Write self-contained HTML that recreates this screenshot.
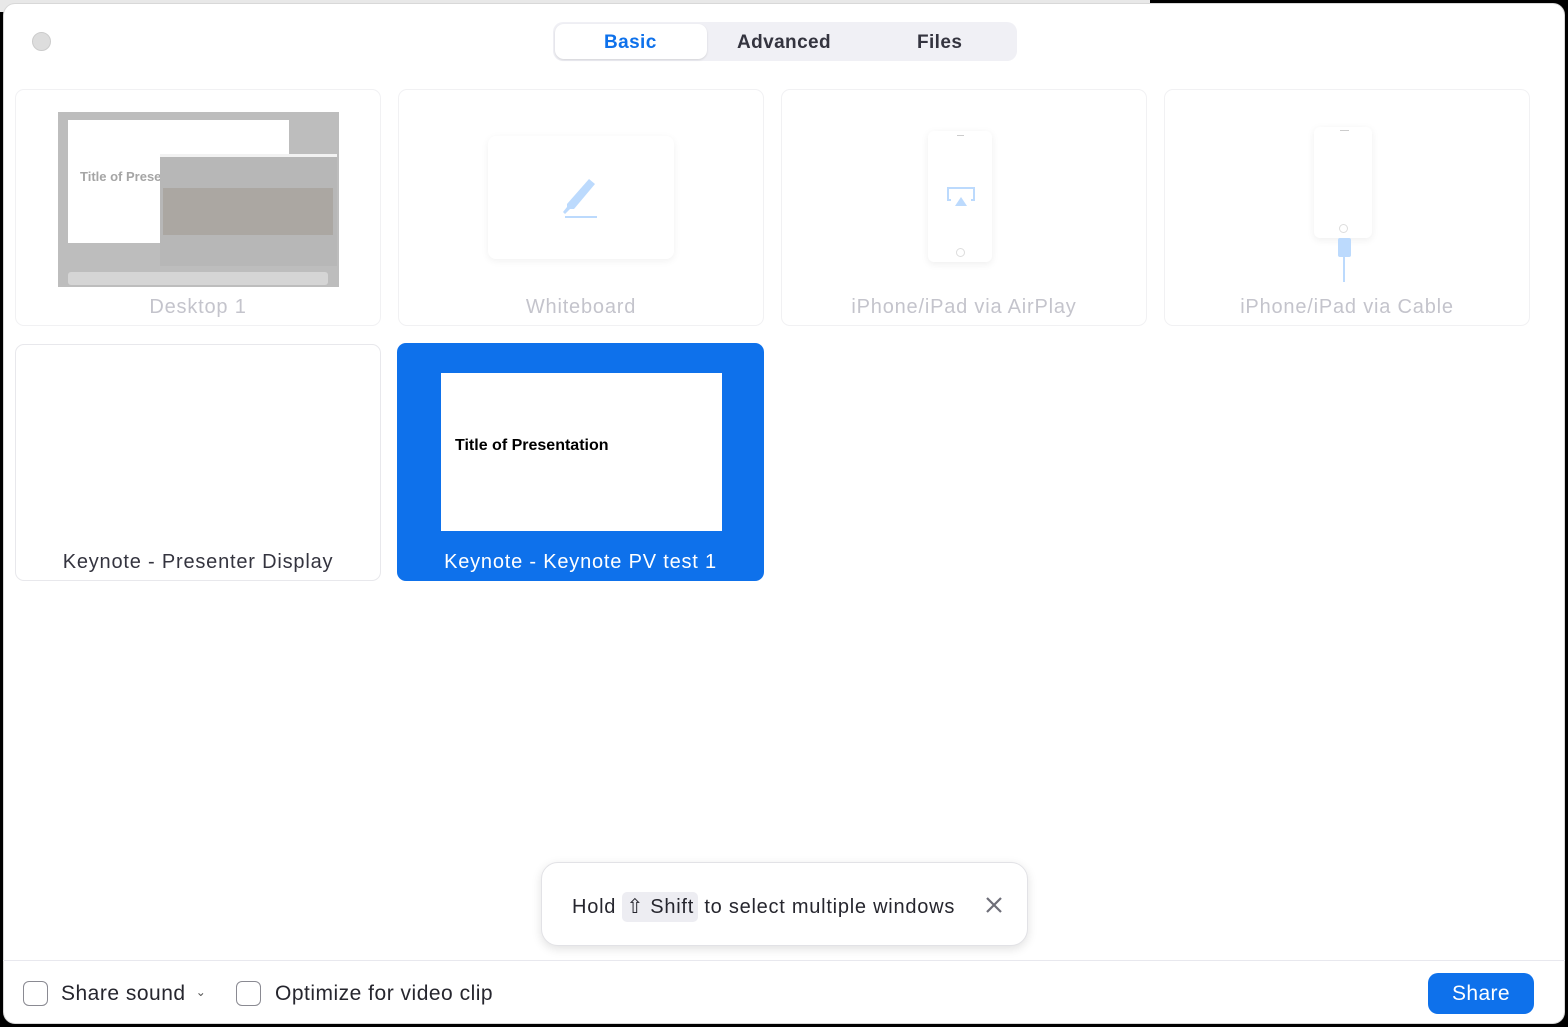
<!DOCTYPE html>
<html><head><meta charset="utf-8"><style>
*{box-sizing:border-box;margin:0;padding:0}
body{width:1568px;height:1027px;background:#000;font-family:"Liberation Sans",sans-serif;position:relative;overflow:hidden}
.top{position:absolute;left:0;top:0;width:1150px;height:12px;background:#e8e8e8}
.win{position:absolute;left:3px;top:3px;width:1562px;height:1021px;background:#fff;border-radius:12px;border:1px solid #d8d8d8}
.dot{position:absolute;left:28px;top:28px;width:19px;height:19px;border-radius:50%;background:#ddd;border:1px solid #ccc}
.seg{position:absolute;left:549px;top:18px;width:464px;height:39px;background:#f0f0f5;border-radius:10px}
.seg .on{position:absolute;left:2px;top:2px;width:152px;height:35px;background:#fff;border-radius:9px;box-shadow:0 1px 2px rgba(0,0,0,.12)}
.seg span{position:absolute;top:10px;font-weight:bold;font-size:19px;color:#34343f;letter-spacing:.4px}
.card{position:absolute;width:366px;height:237px;border:1px solid #f1f1f3;border-radius:9px;background:#fff}
.lbl{position:absolute;left:0;right:0;bottom:6px;text-align:center;font-size:20px;color:#c4c4cc;letter-spacing:.8px}
.sel{background:#0e71eb;border:none}
.sel .lbl{color:#fff}
.pres .lbl{color:#34343f}
.bar{position:absolute;left:3px;top:960px;width:1562px;height:1px;background:#e8e8ee}
.cb{position:absolute;top:981px;width:25px;height:25px;border:1.5px solid #8a8a92;border-radius:6px;background:#fff}
.bt{position:absolute;top:982px;font-size:21px;color:#26262e;letter-spacing:.5px}
.share{position:absolute;left:1428px;top:973px;width:106px;height:41px;background:#0e71eb;border-radius:10px;color:#fff;font-size:21px;text-align:center;line-height:41px;letter-spacing:.4px}
.toast{position:absolute;left:541px;top:862px;width:487px;height:84px;background:#fff;border-radius:17px;border:1px solid #e2e2e6;box-shadow:0 3px 10px rgba(0,0,0,.12)}
.toast .t{position:absolute;left:30px;top:31px;font-size:20px;color:#26262e;white-space:nowrap;letter-spacing:.75px}
.kbd{background:#ededf2;border-radius:5px;padding:4px 4px}
</style></head><body>
<div class="top"></div>
<div class="win">
<div class="dot"></div>
<div class="seg"><div class="on"></div><span style="left:51px;color:#0e71eb">Basic</span><span style="left:184px">Advanced</span><span style="left:364px">Files</span></div>
</div>

<div class="card" style="left:15px;top:89px">
 <div style="position:absolute;left:42px;top:22px;width:281px;height:175px;background:#a8a8a8;opacity:.75">
  <div style="position:absolute;left:10px;top:8px;width:221px;height:123px;background:#fff"></div>
  <div style="position:absolute;left:22px;top:57px;font-size:13px;color:#888;font-weight:bold">Title of Prese</div>
  <div style="position:absolute;left:102px;top:42px;width:177px;height:112px;background:#a0a0a0;border-top:3px solid #eee"></div>
  <div style="position:absolute;left:105px;top:76px;width:170px;height:47px;background:#8f8a84"></div>
  <div style="position:absolute;left:10px;top:160px;width:260px;height:13px;background:#c8c8c8;border-radius:3px"></div>
 </div>
 <div class="lbl">Desktop 1</div>
</div>
<div class="card" style="left:398px;top:89px">
 <div style="position:absolute;left:89px;top:46px;width:186px;height:123px;background:#fff;border-radius:8px;box-shadow:0 2px 8px rgba(0,0,0,.06)"></div>
 <svg style="position:absolute;left:160px;top:84px" width="50" height="45" viewBox="0 0 50 45"><path d="M8 30 L30 5 L36 10 L15 35 L11 35 L6 40 L4 38 L8 33Z" fill="#bcdafd"/><rect x="6" y="42" width="32" height="2" fill="#bcdafd"/></svg>
 <div class="lbl">Whiteboard</div>
</div>
<div class="card" style="left:781px;top:89px">
 <div style="position:absolute;left:146px;top:41px;width:64px;height:131px;background:#fff;border-radius:6px;box-shadow:0 2px 8px rgba(0,0,0,.07)"></div>
 <div style="position:absolute;left:175px;top:45px;width:7px;height:1px;background:#ccc"></div>
 <div style="position:absolute;left:174px;top:158px;width:9px;height:9px;border-radius:50%;border:1px solid #ddd"></div>
 <svg style="position:absolute;left:164px;top:96px" width="30" height="26" viewBox="0 0 30 26"><path d="M5 14 H2 V2 H28 V14 H25" fill="none" stroke="#bcdafd" stroke-width="2"/><path d="M15 11 L21 20 H9Z" fill="#bcdafd"/></svg>
 <div class="lbl">iPhone/iPad via AirPlay</div>
</div>
<div class="card" style="left:1164px;top:89px">
 <div style="position:absolute;left:149px;top:37px;width:58px;height:111px;background:#fff;border-radius:6px;box-shadow:0 2px 8px rgba(0,0,0,.07)"></div>
 <div style="position:absolute;left:175px;top:40px;width:9px;height:1px;background:#ccc"></div>
 <div style="position:absolute;left:174px;top:134px;width:9px;height:9px;border-radius:50%;border:1px solid #ddd"></div>
 <div style="position:absolute;left:173px;top:148px;width:13px;height:19px;background:#bcdafd;border-radius:2px"></div>
 <div style="position:absolute;left:178px;top:167px;width:2px;height:25px;background:#bcdafd"></div>
 <div class="lbl">iPhone/iPad via Cable</div>
</div>
<div class="card pres" style="left:15px;top:344px;border-color:#e8e8ec"><div class="lbl">Keynote - Presenter Display</div></div>
<div class="card sel" style="left:397px;top:343px;height:238px;width:367px">
 <div style="position:absolute;left:44px;top:30px;width:281px;height:158px;background:#fff"><div style="position:absolute;left:14px;top:64px;font-size:16px;font-weight:bold;color:#000">Title of Presentation</div></div>
 <div class="lbl" style="bottom:7px">Keynote - Keynote PV test 1</div>
</div>

<div class="toast"><div class="t">Hold <span class="kbd">⇧ Shift</span> to select multiple windows</div>
<svg style="position:absolute;left:443px;top:33px" width="18" height="18" viewBox="0 0 18 18"><path d="M2 2L16 16M16 2L2 16" stroke="#6e6e78" stroke-width="2.2"/></svg></div>

<div class="bar"></div>
<div class="cb" style="left:23px"></div><div class="bt" style="left:61px">Share sound <span style="font-size:12px;color:#555;vertical-align:4px">&nbsp;⌄</span></div>
<div class="cb" style="left:236px"></div><div class="bt" style="left:275px">Optimize for video clip</div>
<div class="share">Share</div>
</body></html>
